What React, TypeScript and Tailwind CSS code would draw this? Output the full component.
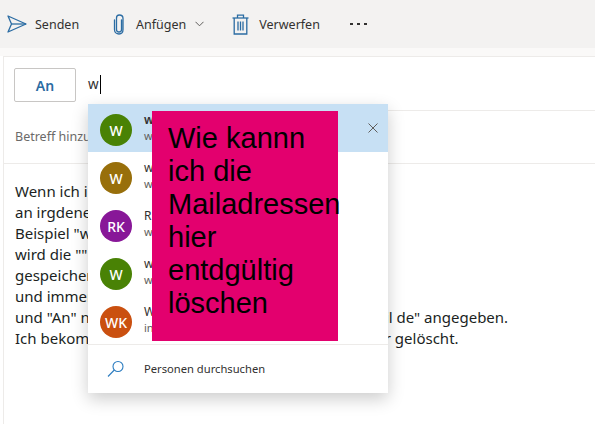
const font = "font-['Noto_Sans','Open_Sans',sans-serif]";

const people = [
  { initials: "W", color: "bg-[#498205]", name: "w", sub: "w", active: true },
  { initials: "W", color: "bg-[#986f0b]", name: "w", sub: "w", active: false },
  { initials: "RK", color: "bg-[#881798]", name: "R", sub: "w", active: false },
  { initials: "W", color: "bg-[#498205]", name: "w", sub: "w", active: false },
  { initials: "WK", color: "bg-[#ca5010]", name: "W", sub: "in", active: false },
];

const bodyLines = [
  "Wenn ich in der neuen Mail",
  "an irgdeneine Adresse schreibe",
  'Beispiel "w" eingebe, dann',
  'wird die "" Adresse, die',
  "gespeichert ist, angezeigt",
  "und immer wieder neu",
  'und "An" nur mit einem Namen im Adressfeld "w-mail de" angegeben.',
  "Ich bekomme die Adressen leider, auch so nicht mehr gelöscht.",
];

function SendIcon() {
  return (
    <svg width="20" height="18" viewBox="0 0 20 18" fill="none" stroke="#2b6ca3" strokeWidth="1.3" strokeLinejoin="round">
      <path d="M1 1 L19 9 L1 17 L4.5 9 Z" />
      <path d="M4.5 9 H19" />
    </svg>
  );
}

function ClipIcon() {
  return (
    <svg width="12" height="21" viewBox="0 0 12 21" fill="none" stroke="#2b6ca3" strokeWidth="1.3" strokeLinecap="round">
      <path d="M8.5 6 V15.5 C8.5 17 7.5 18 6 18 C4.5 18 3.5 17 3.5 15.5 V4 C3.5 2.3 4.6 1 6.3 1 C8.4 1 10 2.4 10 4.5 V15.5 C10 18.2 8.4 20 6 20 C3.6 20 1.5 18.2 1.5 15.5 V6" />
    </svg>
  );
}

function TrashIcon() {
  return (
    <svg width="17" height="21" viewBox="0 0 17 21" fill="none" stroke="#2b6ca3" strokeWidth="1.3">
      <path d="M0.5 4 H16.5" />
      <path d="M5.5 4 V1.2 H11.5 V4" />
      <path d="M2.2 4 V20 H14.8 V4" />
      <path d="M6 7.5 V16.5 M8.5 7.5 V16.5 M11 7.5 V16.5" />
    </svg>
  );
}

function Toolbar() {
  return (
    <div className="flex h-12 items-center bg-[#f3f2f1] text-[12.5px] text-[#323130]">
      <div className="ml-[7px] flex items-center gap-[8px]">
        <SendIcon />
        <span className="pt-[2px]">Senden</span>
      </div>
      <div className="ml-[34px] flex items-center gap-[11px]">
        <ClipIcon />
        <span className="pt-[2px]">Anfügen</span>
      </div>
      <svg className="ml-[9px]" width="9" height="6" viewBox="0 0 9 6" fill="none" stroke="#605e5c" strokeWidth="1">
        <path d="M0.5 0.8 L4.5 4.8 L8.5 0.8" />
      </svg>
      <div className="ml-[28px] flex items-center gap-[10px]">
        <TrashIcon />
        <span className="pt-[2px]">Verwerfen</span>
      </div>
      <div className="ml-[30px] flex items-center gap-[4px]">
        <span className="h-[2px] w-[3px] bg-[#323130]" />
        <span className="h-[2px] w-[3px] bg-[#323130]" />
        <span className="h-[2px] w-[3px] bg-[#323130]" />
      </div>
    </div>
  );
}

function Suggestions() {
  return (
    <div className="absolute left-[88px] top-[104px] w-[300px] bg-white shadow-[0_6px_16px_rgba(0,0,0,0.2)]">
      <div className="h-[240px] overflow-hidden">
        {people.map((p, i) => (
          <div key={i} className={`relative flex h-12 items-start pl-3 pt-[10px] ${p.active ? "bg-[#c7e0f4]" : ""}`}>
            <div className={`flex h-8 w-8 shrink-0 items-center justify-center rounded-full text-[14px] font-medium text-white ${p.color}`}>
              {p.initials}
            </div>
            <div className="ml-3 -mt-[3px] flex flex-col">
              <span className={`text-[12px] leading-[17px] text-[#323130] ${p.active ? "font-semibold" : ""}`}>{p.name}</span>
              <span className="text-[11px] leading-[15px] text-[#605e5c]">{p.sub}</span>
            </div>
            {p.active && (
              <svg className="absolute right-[10px] top-[19px]" width="10" height="10" viewBox="0 0 10 10" fill="none" stroke="#605e5c" strokeWidth="1">
                <path d="M0.5 0.5 L9.5 9.5 M9.5 0.5 L0.5 9.5" />
              </svg>
            )}
          </div>
        ))}
      </div>
      <div className="flex h-[49px] items-center border-t border-[#edebe9] pl-[19px] text-[11.2px] text-[#323130]">
        <svg width="18" height="18" viewBox="0 0 18 18" fill="none" stroke="#2b7cc0" strokeWidth="1.1">
          <circle cx="11" cy="6.5" r="5" />
          <path d="M7.3 10 L1 16.5" />
        </svg>
        <span className="ml-[19px]">Personen durchsuchen</span>
      </div>
    </div>
  );
}

export default function App() {
  return (
    <div className={`relative h-[424px] w-[595px] overflow-hidden bg-white ${font}`}>
      <Toolbar />
      <div className="h-2 bg-[#faf9f8]" />
      <div className="ml-[3px] h-[368px] border-l border-t border-[#edebe9]">
        <div className="flex h-[54px] pl-[10px]">
          <button className="mt-[11px] h-[34px] w-[62px] rounded-[2px] border border-[#c8c6c4] text-[14px] font-semibold text-[#2b6ca3]">An</button>
          <div className="ml-3 flex flex-1 items-start border-b border-[#edebe9] pt-[18px]">
            <span className="text-[13.5px] leading-[19px] text-[#323130]">w</span>
            <span className="ml-[1px] h-[19px] w-px bg-black" />
          </div>
        </div>
        <div className="flex h-[53px] items-center border-b border-[#edebe9] pl-[11px] text-[12.5px] text-[#6b6a69]">
          Betreff hinzufügen
        </div>
        <div className="whitespace-nowrap pl-[11px] pt-[17px] text-[15px] leading-[21px] text-[#201f1e]">
          {bodyLines.map((line, i) => (
            <div key={i}>{line}</div>
          ))}
        </div>
      </div>
      <Suggestions />
      <div className="absolute left-[152px] top-[111px] h-[230px] w-[186px] whitespace-pre bg-[#e3006e] pl-4 pt-[11px] font-['Liberation_Sans',Arial,sans-serif] text-[29px] leading-[33px] text-black">
        {"Wie kannn\nich die\nMailadressen\nhier\nentdgültig\nlöschen"}
      </div>
    </div>
  );
}
